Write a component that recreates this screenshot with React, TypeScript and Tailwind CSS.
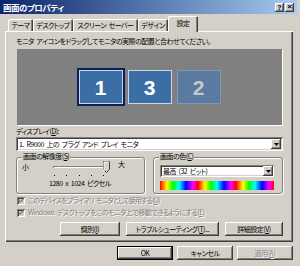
import React from 'react';

const raised =
  'shadow-[inset_-1px_-1px_#404040,inset_1px_1px_#ffffff,inset_-2px_-2px_#808080,inset_2px_2px_#d4d0c8]';
const sunken =
  'shadow-[inset_1px_1px_#808080,inset_-1px_-1px_#ffffff,inset_2px_2px_#404040,inset_-2px_-2px_#d4d0c8]';

const tabs = [
  { name: 'テーマ', w: 'w-[25px]' },
  { name: 'デスクトップ', w: 'w-[40px]' },
  { name: 'スクリーン セーバー', w: 'w-[65px]' },
  { name: 'デザイン', w: 'w-[30px]' },
];

const monitors = [
  { n: '1', selected: true, dim: false },
  { n: '3', selected: false, dim: false },
  { n: '2', selected: false, dim: true },
];

const ArrowButton: React.FC = () => (
  <div className={`w-[10px] h-[10px] bg-[#d4d0c8] ${raised} flex items-center justify-center`}>
    <svg width="5" height="3" viewBox="0 0 5 3">
      <path d="M0 0h5L2.5 3z" fill="#000" />
    </svg>
  </div>
);

const Button: React.FC<{ className?: string; disabled?: boolean; children: React.ReactNode }> = ({
  className = '',
  disabled,
  children,
}) => (
  <div
    className={`h-[14px] bg-[#d4d0c8] ${raised} flex items-center justify-center whitespace-nowrap ${
      disabled ? 'text-[#808080] [text-shadow:1px_1px_#ffffff]' : ''
    } ${className}`}
  >
    <span>{children}</span>
  </div>
);

const Check: React.FC<{ className?: string; children: React.ReactNode }> = ({ className = '', children }) => (
  <div className="flex items-center h-[9px] pl-[1px]">
    <div className={`w-[8px] h-[8px] bg-[#d4d0c8] ${sunken} flex items-center justify-center`}>
      <svg width="6" height="5" viewBox="0 0 6 5">
        <path d="M0.5 2.2l1.8 1.8 3.2-3.5" stroke="#808080" strokeWidth="1.3" fill="none" />
      </svg>
    </div>
    <span className={`ml-[3px] whitespace-nowrap text-[#808080] [text-shadow:1px_1px_#ffffff] ${className}`}>
      {children}
    </span>
  </div>
);

export default function App() {
  return (
    <div className="w-[300px] h-[266px] overflow-hidden bg-[#d4d0c8] text-black text-[7px] tracking-[-0.5px] [word-spacing:1.5px] leading-none font-['Noto_Sans_CJK_JP',sans-serif] [font-feature-settings:'palt']">
      {/* title bar */}
      <div className="w-[297px] h-[14px] flex items-center justify-between pl-[3px] pr-[3px] bg-[linear-gradient(90deg,#0a246a,#a6caf0)]">
        <span className="text-white font-bold text-[8.5px]">画面のプロパティ</span>
        <div className="flex gap-[1px] tracking-normal">
          <div className={`w-[9px] h-[9px] bg-[#d4d0c8] ${raised} flex items-center justify-center text-[7px] font-bold font-['Liberation_Sans',sans-serif]`}>
            ?
          </div>
          <div className={`w-[9px] h-[9px] bg-[#d4d0c8] ${raised} flex items-center justify-center text-[8px] font-bold font-['Liberation_Sans',sans-serif]`}>
            ×
          </div>
        </div>
      </div>

      {/* tabs */}
      <div className="h-[15px] mt-[2px] flex items-end pl-[8px] relative z-10">
        {tabs.map((t) => (
          <div
            key={t.name}
            className={`${t.w} h-[12px] whitespace-nowrap rounded-t-[2px] flex items-center justify-center shadow-[inset_1px_1px_#ffffff,inset_-1px_0_#404040,inset_-2px_0_#808080]`}
          >
            {t.name}
          </div>
        ))}
        <div className="w-[30px] h-[16px] -mb-[1px] rounded-t-[2px] bg-[#d4d0c8] flex items-center justify-center pb-[1px] shadow-[inset_1px_1px_#ffffff,inset_-1px_0_#404040,inset_-2px_0_#808080]">
          設定
        </div>
      </div>

      {/* panel */}
      <div className="ml-[5px] w-[288px] h-[211px] pl-[11px] pr-[10px] pt-[7px] flex flex-col shadow-[inset_1px_1px_#ffffff,inset_-1px_-1px_#404040,inset_-2px_-2px_#808080]">
        <div className="h-[9px] whitespace-nowrap">モニタ アイコンをドラッグしてモニタの実際の配置と合わせてください。</div>

        <div className="mt-[2px] mx-[1px] h-[76px] bg-[#808080] shadow-[1px_1px_#ffffff] flex items-center justify-center gap-[5px] tracking-normal">
          {monitors.map((m) => (
            <div
              key={m.n}
              className={`w-[44px] h-[34px] flex items-center justify-center font-['Liberation_Sans',sans-serif] font-bold text-[21px] ${
                m.dim
                  ? 'bg-[#5b7aa0] text-[#c6c9cc] border border-[#7f97b4]'
                  : 'bg-[#3a6ea5] text-white border border-[#c8d6e6]'
              } ${m.selected ? 'outline-2 outline-[#0a1f5c]' : ''}`}
            >
              {m.n}
            </div>
          ))}
        </div>

        <div className="mt-[3px] h-[9px]">
          ディスプレイ(<span className="underline">D</span>):
        </div>
        <div className={`h-[14px] bg-white ${sunken} flex items-center justify-between pl-[3px] pr-[2px]`}>
          <span className="whitespace-nowrap">1. R9000 上の プラグ アンド プレイ モニタ</span>
          <ArrowButton />
        </div>

        <div className="mt-[6px] flex justify-between">
          {/* resolution */}
          <div className="relative w-[129px] h-[37px] rounded-[3px] border border-[#808080] shadow-[inset_1px_1px_#ffffff,1px_1px_#ffffff]">
            <span className="absolute -top-[5px] left-[5px] px-[1px] bg-[#d4d0c8] whitespace-nowrap">
              画面の解像度(<span className="underline">S</span>)
            </span>
            <div className="flex items-start mt-[5px] pl-[5px]">
              <span className="w-[30px] mt-[1px]">小</span>
              <div className="relative w-[60px] h-[18px]">
                <div className="absolute left-[1px] top-[3px] w-[54px] h-[2px] shadow-[inset_1px_1px_#808080,inset_-1px_-1px_#ffffff]" />
                <svg className="absolute left-[51px] -top-[2px]" width="7" height="12" viewBox="0 0 7 12">
                  <path d="M0.5 0.5h6v8l-3 3l-3-3z" fill="#d4d0c8" stroke="#404040" strokeWidth="1" />
                  <path d="M1 10V1h5" stroke="#ffffff" strokeWidth="1" fill="none" />
                </svg>
                <div className="absolute left-[2px] top-[12px] w-[50px] flex justify-between">
                  {[0, 1, 2, 3, 4].map((i) => (
                    <div key={i} className="w-[1px] h-[1px] bg-black" />
                  ))}
                </div>
              </div>
              <span className="ml-[6px] -mt-[2px]">大</span>
            </div>
            <div className="mt-[-1px] text-center pr-[1px] whitespace-nowrap">1280 x 1024 ピクセル</div>
          </div>

          {/* colour */}
          <div className="relative w-[130px] h-[37px] rounded-[3px] border border-[#808080] shadow-[inset_1px_1px_#ffffff,1px_1px_#ffffff] pl-[6px] pr-[8px] pt-[7px]">
            <span className="absolute -top-[5px] left-[5px] px-[1px] bg-[#d4d0c8] whitespace-nowrap">
              画面の色(<span className="underline">C</span>)
            </span>
            <div className={`h-[12px] bg-white ${sunken} flex items-center justify-between pl-[3px] pr-[1px]`}>
              <span className="whitespace-nowrap">最高 (32 ビット)</span>
              <ArrowButton />
            </div>
            <div className="mt-[4px] h-[9px] bg-[repeating-linear-gradient(90deg,#ff0000_0px,#ffff00_7px,#00ff00_13px,#00ffff_19px,#0000ff_26px,#ff00ff_33px,#ff0000_38px)]" />
          </div>
        </div>

        <div className="mt-[2px] flex flex-col gap-[3px]">
          <Check className="tracking-[-0.8px]">
            このデバイスをプライマリ モニタとして使用する(<span className="underline">U</span>)
          </Check>
          <Check>
            Windows デスクトップをこのモニタ上で移動できるようにする(<span className="underline">E</span>)
          </Check>
        </div>

        <div className="mt-[5px] flex justify-end gap-[6px]">
          <Button className="w-[60px]">
            識別(<span className="underline">I</span>)
          </Button>
          <Button className="w-[93px]">
            トラブルシューティング(<span className="underline">T</span>)...
          </Button>
          <Button className="w-[58px]">
            詳細設定(<span className="underline">V</span>)
          </Button>
        </div>
      </div>

      {/* dialog buttons */}
      <div className="mt-[4px] w-[293px] flex justify-end gap-[4px]">
        <Button className="w-[56px] border border-black">OK</Button>
        <Button className="w-[56px]">キャンセル</Button>
        <Button className="w-[56px]" disabled>
          適用(<span className="underline">A</span>)
        </Button>
      </div>
    </div>
  );
}
